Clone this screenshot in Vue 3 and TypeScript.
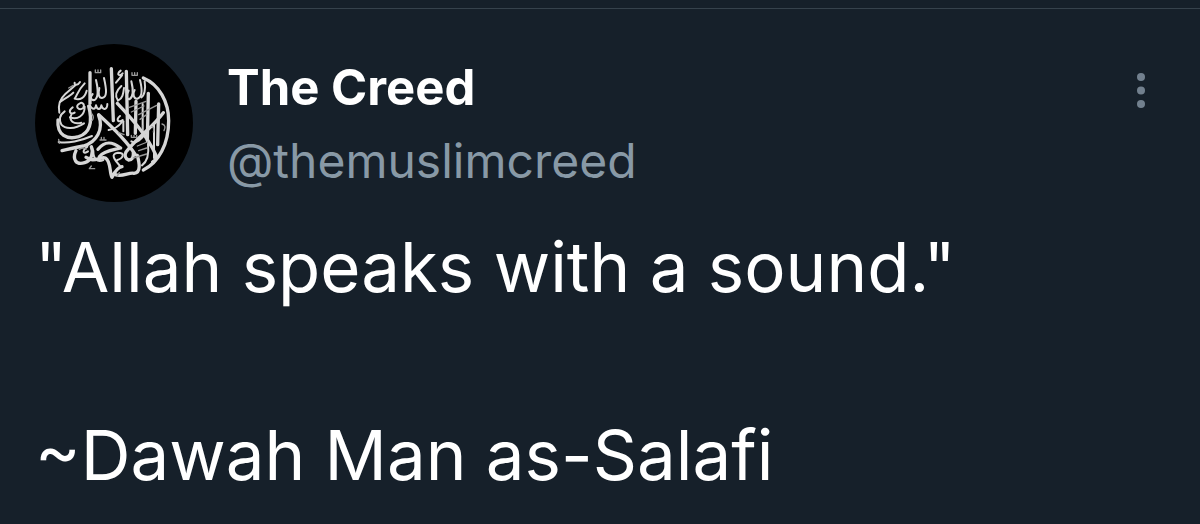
<script setup lang="ts">
interface Post {
  name: string
  handle: string
  text: string
}

const post: Post = {
  name: 'The Creed',
  handle: '@themuslimcreed',
  text: '"Allah speaks with a sound."\n\n~Dawah Man as-Salafi',
}

const heavyStrokes: string[] = [
  'M180 96 V188',
  'M244 84 L250 240',
  'M289 92 L293 282',
  'M318 182 L316 278',
  'M355 158 L352 300',
  'M386 190 L383 312',
  'M340 112 C388 132 416 184 416 240 C416 310 386 366 340 388',
  'M262 188 C300 228 350 282 378 344 Q382 356 368 364',
  'M206 222 C246 258 290 300 316 342',
  'M400 216 C366 262 322 290 288 334 Q280 350 296 358 Q312 358 310 336',
  'M84 238 C80 284 112 298 146 288 C176 278 190 250 176 196',
  'M206 224 C222 266 200 304 160 316 C140 320 112 326 96 330',
  'M138 330 C126 356 138 374 164 366 C184 360 192 336 184 318',
  'M168 350 C190 368 214 346 226 352 C244 362 238 398 246 410 C252 398 262 380 276 378',
  'M204 326 C226 298 248 304 272 322 C250 328 222 330 208 348',
  'M256 402 C276 410 298 394 312 398 C334 396 328 366 322 344',
]

const mediumStrokes: string[] = [
  'M134 126 C132 136 144 134 150 124 M136 134 L106 160 C86 178 84 196 88 216',
  'M90 184 C110 168 122 166 130 156',
  'M164 128 C142 150 142 164 134 174 C150 180 164 172 170 150',
  'M198 118 C204 144 208 168 194 178 C184 180 178 172 188 160',
  'M222 112 C230 148 232 170 216 172 C206 172 204 160 208 142',
  'M150 188 C132 196 146 212 160 202 C166 188 154 184 150 188 M164 198 C164 226 142 238 120 230',
  'M128 200 C112 212 122 224 134 216 M124 222 C116 240 130 252 154 246',
  'M180 194 C188 210 196 206 198 194 C202 210 212 208 214 194 C218 210 232 208 232 190',
  'M104 212 C90 222 86 236 94 252 C106 266 134 266 162 248',
  'M272 90 C256 102 270 108 278 98 M276 104 L258 126',
  'M274 136 C252 156 258 172 264 180 C278 174 280 158 282 142',
  'M304 122 C310 148 312 168 298 176 C286 176 290 160 296 150',
  'M330 118 C338 150 336 170 322 174 C310 176 308 158 314 148',
  'M344 122 C348 148 342 166 334 170',
  'M270 226 C256 238 266 248 278 238 M276 244 C264 260 248 266 236 268',
  'M280 242 V272',
  'M86 304 C112 310 154 300 186 286',
  'M172 318 C154 332 160 342 174 332',
  'M190 330 C190 356 202 366 220 358',
  'M304 302 C318 312 338 292 346 278',
  'M270 376 C256 360 238 340 264 336 C288 336 278 354 262 358',
  'M336 374 C352 362 358 344 354 310',
  'M372 246 V352',
  'M338 190 V278',
]

const fineStrokes: string[] = [
  'M196 88 V96 H204 V88 M204 96 H212 V88',
  'M306 96 V104 H314 V96 M314 104 H322 V96',
  'M116 142 L130 134',
  'M210 298 H228 M214 290 V298 M222 290 V298',
  'M178 384 H194 M184 376 L178 384',
  'M86 296 L88 308',
  'M298 200 L348 182 M304 214 L342 196',
  'M326 222 L380 194',
  'M330 236 L350 222',
  'M304 284 V290 H312 V284 M312 290 H320 V284',
  'M340 254 V268 M366 258 Q374 262 370 274',
  'M396 250 Q410 254 402 270',
  'M322 316 L352 304 M326 330 L350 322',
  'M266 276 L282 282',
  'M148 326 Q160 318 168 326',
  'M310 352 L350 340',
  'M268 396 L262 406',
  'M186 220 Q194 230 186 240',
]
</script>

<template>
  <main class="page">
    <article class="post">
      <header class="post-header">
        <svg class="avatar" viewBox="15 10 474 474" role="img" aria-label="Profile picture">
          <circle cx="252" cy="247" r="237" fill="#000" />
          <g fill="none" stroke="#d6d6d6" stroke-linecap="round" stroke-linejoin="round">
            <path v-for="d in heavyStrokes" :key="d" :d="d" stroke-width="10" />
            <path v-for="d in mediumStrokes" :key="d" :d="d" stroke-width="6" />
            <path v-for="d in fineStrokes" :key="d" :d="d" stroke-width="4" stroke="#999999" />
          </g>
        </svg>
        <div class="author">
          <strong class="name">{{ post.name }}</strong>
          <a class="handle" href="#">{{ post.handle }}</a>
        </div>
        <button class="more" type="button" aria-label="More options">
          <svg viewBox="0 0 10 36" width="10" height="36" fill="#72808e">
            <circle cx="5" cy="5" r="4" />
            <circle cx="5" cy="18.5" r="4" />
            <circle cx="5" cy="32" r="4" />
          </svg>
        </button>
      </header>
      <p class="text">{{ post.text }}</p>
    </article>
  </main>
</template>

<style>
body {
  margin: 0;
  background: #16202a;
}
</style>

<style scoped>
.page {
  min-height: 100vh;
  box-sizing: border-box;
  padding-top: 8px;
  background: #16202a;
  font-family: Inter, "Liberation Sans", Arial, sans-serif;
}

.post {
  border-top: 1px solid #36424c;
  padding: 35px 36px 0 35px;
}

.post-header {
  display: flex;
  align-items: flex-start;
}

.avatar {
  width: 158px;
  height: 158px;
  flex: none;
}

.author {
  display: flex;
  flex-direction: column;
  flex: 1;
  gap: 13px;
  min-width: 0;
  padding: 14px 0 0 34px;
}

.name,
.handle {
  line-height: 60px;
}

.name {
  color: #fff;
  font-size: 49px;
  font-weight: 700;
}

.handle {
  color: #8899a6;
  font-size: 48px;
  text-decoration: none;
}

.more {
  display: flex;
  justify-content: center;
  width: 46px;
  margin-top: 28px;
  padding: 0;
  border: 0;
  background: none;
  cursor: pointer;
}

.text {
  margin: 18px 0 0;
  color: #fff;
  font-size: 69px;
  font-weight: 400;
  line-height: 94px;
  white-space: pre-wrap;
}
</style>
